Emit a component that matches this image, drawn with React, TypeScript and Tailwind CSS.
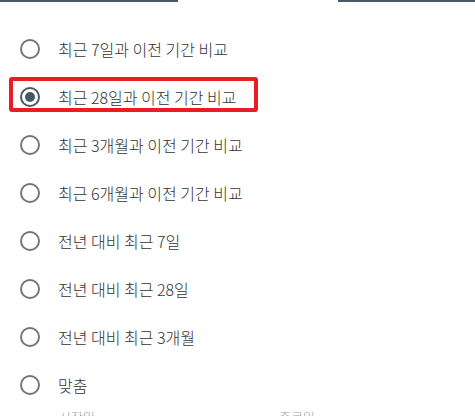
import React from "react";

const items = [
  "최근 7일과 이전 기간 비교",
  "최근 28일과 이전 기간 비교",
  "최근 3개월과 이전 기간 비교",
  "최근 6개월과 이전 기간 비교",
  "전년 대비 최근 7일",
  "전년 대비 최근 28일",
  "전년 대비 최근 3개월",
  "맞춤",
];

function Radio({ checked }: { checked: boolean }) {
  return checked ? (
    <span className="flex h-[20px] w-[20px] shrink-0 items-center justify-center rounded-full border-2 border-[#455a64]">
      <span className="h-[10px] w-[10px] rounded-full bg-[#455a64]" />
    </span>
  ) : (
    <span className="h-[20px] w-[20px] shrink-0 rounded-full border-2 border-[#757575]" />
  );
}

export default function App() {
  return (
    <div
      className="relative h-[416px] w-[475px] overflow-hidden bg-white"
      style={{ fontFamily: '"Noto Sans CJK KR", Roboto, sans-serif' }}
    >
      <div className="flex h-[2px] justify-between">
        <div className="w-[178px] bg-[#455a64]" />
        <div className="w-[137px] bg-[#455a64]" />
      </div>
      <div className="pt-[23px]">
        {items.map((t, i) => (
          <div key={t} className="relative flex h-12 items-center pl-5">
            {i === 1 && (
              <div className="absolute left-[9px] top-[4px] h-[35px] w-[249px] rounded-[3px] border-[4px] border-[#ec1c24]" />
            )}
            <Radio checked={i === 1} />
            <span className="ml-[18px] text-[16px] font-light text-[#333333]">{t}</span>
          </div>
        ))}
        <div className="flex pl-[59px] pt-0 text-[13px] leading-[16px] font-light text-[#9e9e9e]">
          <span className="w-[220px]">시작일</span>
          <span>종료일</span>
        </div>
      </div>
    </div>
  );
}
